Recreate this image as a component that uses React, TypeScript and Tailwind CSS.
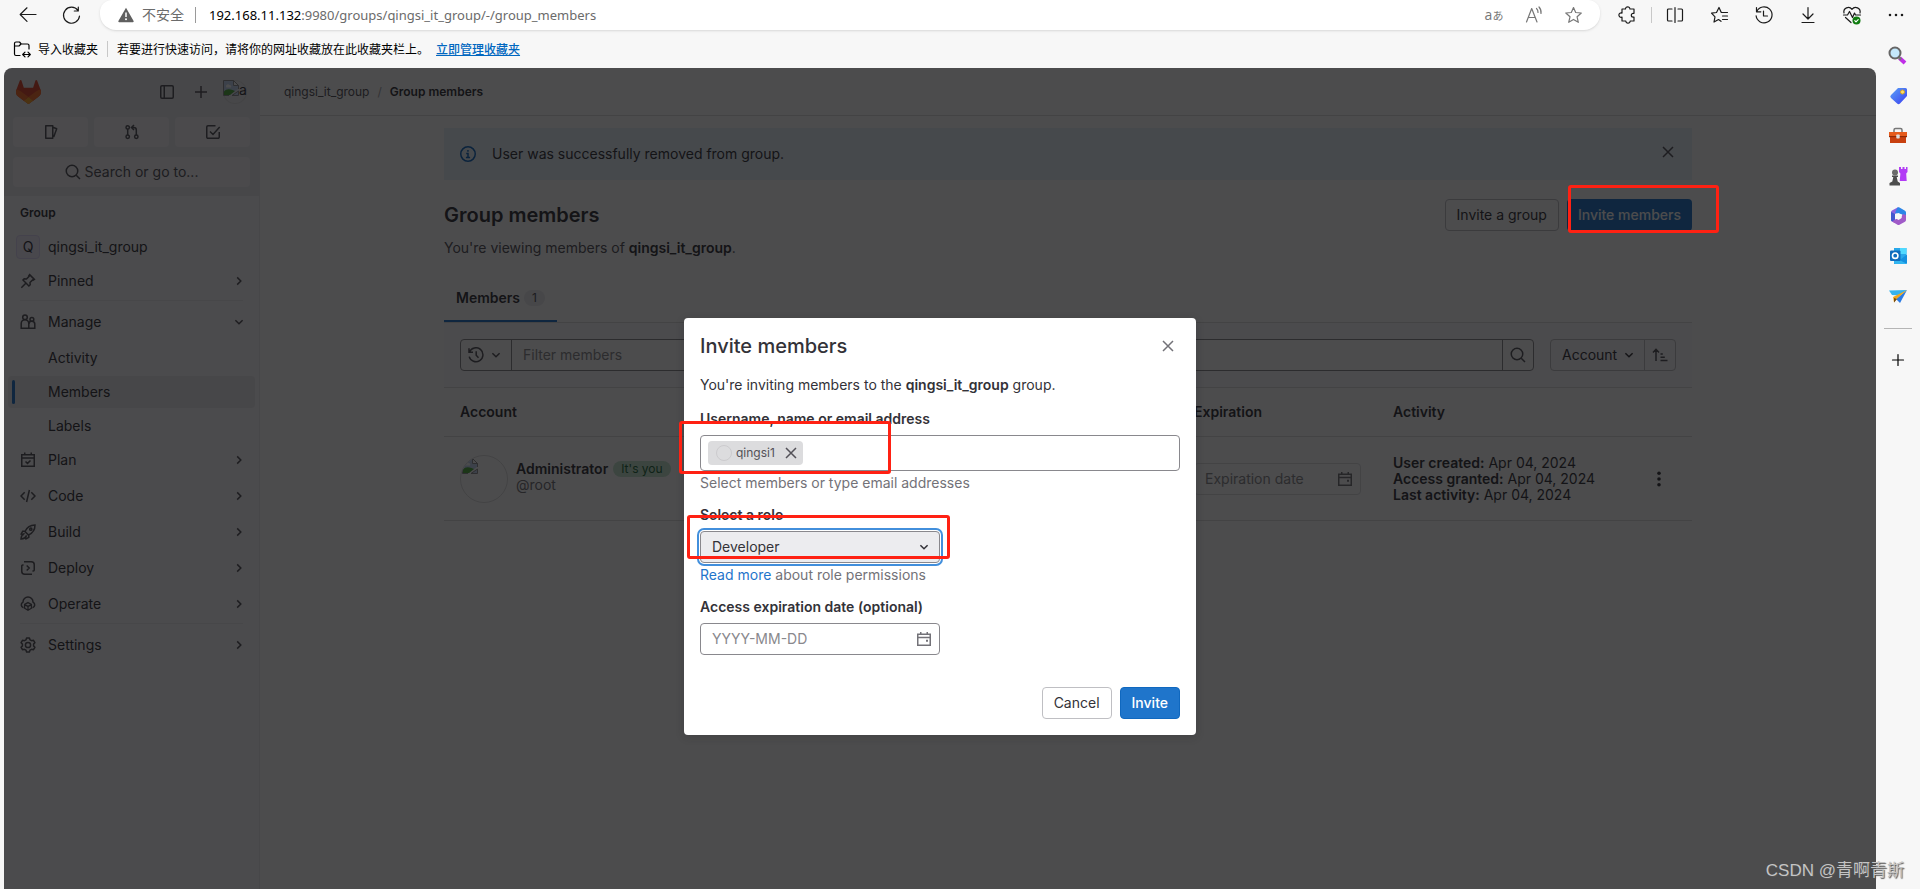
import React, { useState } from 'react';

type IconProps = { children: React.ReactNode; size?: number; className?: string; stroke?: number };

const Icon: React.FC<IconProps> = ({ children, size = 16, className = '', stroke = 1.5 }) => (
  <svg width={size} height={size} viewBox="0 0 16 16" fill="none" stroke="currentColor" strokeWidth={stroke} className={`shrink-0 ${className}`} aria-hidden="true">
    {children}
  </svg>
);

// 20x20 outline icons used by the browser chrome
const ChromeIcon: React.FC<IconProps> = ({ children, size = 20, className = '', stroke = 1.2 }) => (
  <svg width={size} height={size} viewBox="0 0 20 20" fill="none" stroke="currentColor" strokeWidth={stroke} strokeLinecap="round" strokeLinejoin="round" className={`shrink-0 ${className}`} aria-hidden="true">
    {children}
  </svg>
);

const ChevronRight = () => <Icon><path d="M6.2 4.4 9.8 8l-3.6 3.6" /></Icon>;
const ChevronDown = () => <Icon><path d="M4.4 6.2 8 9.8l3.6-3.6" /></Icon>;
const Close = () => <Icon><path d="m3 3 10 10M13 3 3 13" /></Icon>;
const SearchIcon = () => <Icon><circle cx="7" cy="7" r="5.75" /><path d="m11.2 11.2 3.8 3.8" /></Icon>;
const History = () => (
  <Icon><path d="M1 1.2v4h4M1.5 5A7 7 0 1 1 1.2 9.6M8.2 4.2v4.1l2.3 2.4" /></Icon>
);
const Calendar = () => (
  <Icon><path d="M1.75 3.25h12.5v11H1.75zM1.75 6.4h12.5M4.75 1v2.5M11.25 1v2.5" /><path d="M10 9.75h2" strokeWidth="2" /></Icon>
);

const Tanuki = () => (
  <svg width="25" height="24" viewBox="0 0 25 24" aria-hidden="true">
    <path d="m24.507 9.5-.034-.09L21.082.562a.896.896 0 0 0-1.694.091l-2.29 7.01H7.825L5.535.653a.898.898 0 0 0-1.694-.09L.451 9.411.416 9.5a6.297 6.297 0 0 0 2.09 7.278l.012.01.03.022 5.16 3.867 2.56 1.935 1.554 1.176a1.051 1.051 0 0 0 1.268 0l1.555-1.176 2.56-1.935 5.197-3.89.014-.01A6.297 6.297 0 0 0 24.507 9.5Z" fill="#E24329" />
    <path d="m24.507 9.5-.034-.09a11.44 11.44 0 0 0-4.56 2.051l-7.447 5.632 4.742 3.584 5.197-3.89.014-.01A6.297 6.297 0 0 0 24.507 9.5Z" fill="#FC6D26" />
    <path d="m7.707 20.677 2.56 1.935 1.555 1.176a1.051 1.051 0 0 0 1.268 0l1.555-1.176 2.56-1.935-4.743-3.584-4.755 3.584Z" fill="#FCA326" />
    <path d="M5.01 11.461a11.43 11.43 0 0 0-4.56-2.05L.416 9.5a6.297 6.297 0 0 0 2.09 7.278l.012.01.03.022 5.16 3.867 4.745-3.584-7.444-5.632Z" fill="#FC6D26" />
  </svg>
);

const BrokenImage = () => (
  <svg width="16" height="16" viewBox="0 0 16 16" className="shrink-0" aria-hidden="true">
    <path d="M.5.5h10l5 5v3L6 15.500H.5z" fill="#c3d6f5" />
    <path d="M3 6.500a2 2 0 0 1 3.500-1.500A1.600 1.600 0 0 1 8 7.500H3.500z" fill="#fff" />
    <path d="M1 15v-3.500C3 9 6 8.500 9.500 10L12 11l-5 4z" fill="#4fae3c" />
    <path d="M6 15.500H.5V.5h10l5 5V9" fill="none" stroke="#8f8f93" />
    <path d="M10.500.5v5h5z" fill="#fff" stroke="#8f8f93" />
    <path d="M9 15.500h6.500v-4.500z" fill="#c3d6f5" stroke="#8f8f93" />
  </svg>
);

const navIcons: Record<string, React.ReactNode> = {
  Pinned: <Icon><path d="m9.6 1.6 4.8 4.8-1.2.8-.6-.3-2.6 2.6.2 2.3-1.3 1.2L3 7.1l1.2-1.3 2.3.2 2.6-2.6-.3-.6zM5.8 10.2 1.3 14.7" /></Icon>,
  Manage: <Icon><circle cx="5" cy="3.2" r="2.3" /><path d="M1.2 14.2V9.500a3.800 3.800 0 0 1 7.600 0v4.700z" /><circle cx="11.900" cy="5.400" r="1.900" /><path d="M9 14.200h5.800V10.500a3 3 0 0 0-6-.6" /></Icon>,
  Plan: <Icon><path d="M1.75 2.75h12.500v11.500H1.75zM1.75 6h12.500M4.75.500V3M11.250.500V3M5.500 9.500l2 1.900 3-2.900" /></Icon>,
  Code: <Icon><path d="M4.700 4.200 1 8l3.700 3.800M11.300 4.200 15 8l-3.700 3.800M9.400 2 6.600 14" /></Icon>,
  Build: <Icon><path d="M15 1c-5 0-8 2-10 6.500L8.500 11C13 9 15 6 15 1zM5.200 7.200H2.700L1.200 10l2.600.8M8.800 10.800v2.500L6 14.800l-.8-2.600M4.600 9.400C2 10.500 1.200 12 1 15c3-.2 4.500-1 5.600-3.600" /><circle cx="10.800" cy="5.200" r="1.100" /></Icon>,
  Deploy: <Icon><path d="M4 1.750h7.250a3 3 0 0 1 3 3V10a1 1 0 0 1-1 1h-.8M12 14.250H4.750a3 3 0 0 1-3-3V6a1 1 0 0 1 1-1h.8M6.700 5.500 9.200 8l-2.500 2.500" /></Icon>,
  Operate: <Icon><path d="M3.500 11.700A3 3 0 0 1 3 6.100a5 5 0 0 1 10 0 3 3 0 0 1-.5 5.600" /><path d="m8 6.600 3.400 1.900v3.700L8 14.200l-3.400-2V8.500zM4.600 8.600 8 10.400l3.400-1.800M8 10.400V14" strokeWidth="1.300" /></Icon>,
  Settings: <Icon><path d="M6.600 1h2.800l.6 1.800 1.600.9 1.900-.4 1.400 2.400L13.600 7.100v1.800l1.300 1.400-1.400 2.400-1.900-.4-1.600.9-.6 1.800H6.600L6 13.200l-1.600-.9-1.900.4-1.400-2.400 1.300-1.400V7.100L1.100 5.700l1.400-2.400 1.900.4L6 2.800z" strokeLinejoin="round" /><circle cx="8" cy="8" r="2.600" /></Icon>,
};

const Highlight: React.FC<{ className: string }> = ({ className }) => (
  <span className={`absolute z-30 border-[3px] border-[#ff2113] rounded-[3px] pointer-events-none ${className}`} />
);

const NavItem: React.FC<{ label: string; open?: boolean }> = ({ label, open }) => (
  <button className="w-full h-8 pl-3 pr-2 flex items-center text-left text-sm text-[#333238]">
    <span className="w-7 text-[#535158]">{navIcons[label]}</span>
    <span className="flex-1">{label}</span>
    <span className="text-[#535158]">{open ? <ChevronDown /> : <ChevronRight />}</span>
  </button>
);

const SubItem: React.FC<{ label: string; active?: boolean }> = ({ label, active }) => (
  <a href="#" className={`h-8 pl-1 flex items-center rounded text-sm text-[#333238] ${active ? 'bg-[#ececef]' : ''}`}>
    <span className={`w-[3px] h-6 rounded-sm ${active ? 'bg-[#1f75cb]' : ''}`} />
    <span className="ml-[33px]">{label}</span>
  </a>
);

const BrowserBar = () => (
  <header className="bg-[#f7f7f7] text-[#1b1b1b]">
    <div className="h-[30px] flex items-start">
      <div className="w-[100px] shrink-0 h-6 mt-[3px] flex items-center">
        <button aria-label="Back" className="ml-[18px] mr-6"><ChromeIcon><path d="M18 9.500H2.500M9 2.800 2.200 9.500 9 16.300" /></ChromeIcon></button>
        <button aria-label="Refresh"><ChromeIcon><path d="M16 5.500A8 8 0 1 0 17.500 11M16.300 2v4h-4" /></ChromeIcon></button>
      </div>
      <div className="flex-1 h-[30px] bg-white rounded-b-2xl rounded-t-xl shadow-sm flex items-center pl-[18px] pr-4 font-['Open_Sans','Noto_Sans_CJK_SC',sans-serif]">
        <svg width="16" height="16" viewBox="0 0 16 16" aria-hidden="true">
          <path d="M8 .8 15.600 14a.8.8 0 0 1-.7 1.200H1.100A.8.800 0 0 1 .4 14z" fill="#5f5f5f" />
          <path d="M8 5.500v4.500" stroke="#fff" strokeWidth="1.500" /><circle cx="8" cy="12.300" r="1" fill="#fff" />
        </svg>
        <span className="ml-2 text-sm leading-5 text-[#6b6b6b]">不安全</span>
        <span className="w-px h-4 mx-[11px] bg-[#9a9a9a]" />
        <span className="flex-1 ml-0.5 text-[13px] leading-5 text-[#6b6b6b] font-['Noto_Sans',sans-serif]"><span className="text-black">192.168.11.132</span>:9980/groups/qingsi_it_group/-/group_members</span>
        <div className="flex items-center gap-5 text-[#777]">
          <button aria-label="Translate" className="w-5 text-sm leading-5 whitespace-nowrap">a<span className="text-[11px]">あ</span></button>
          <button aria-label="Read aloud"><ChromeIcon><path d="m2.500 17 5.200-13.500L13 17M4.500 12.500h6.500M12.500 3.500a5 5 0 0 1 1.500 4M15 2a8 8 0 0 1 2 6.500" /></ChromeIcon></button>
          <button aria-label="Add to favorites"><ChromeIcon><path d="m9.500 2.500 2.200 5 5.600.5-4.200 3.800 1.200 5.500-4.800-2.900-4.800 2.900L6 11.800 1.800 8l5.500-.5z" /></ChromeIcon></button>
        </div>
      </div>
      <div className="h-[30px] pl-[18px] pr-3.5 flex items-center gap-6">
        <button aria-label="Extensions"><ChromeIcon><path d="M4 4h3.500a2.200 2.200 0 1 1 4.400 0H16v4.300h-.8a1.900 1.900 0 1 0 0 3.800h.8V16h-3.800a2.200 2.200 0 1 1-4.400 0H4v-3.900a2.200 2.200 0 1 1 0-4z" /></ChromeIcon></button>
        <span className="w-px h-4 -mx-[11px] bg-[#c8c8c8]" />
        <button aria-label="Split screen"><ChromeIcon><path d="M7 4H3.500a1 1 0 0 0-1 1v10a1 1 0 0 0 1 1H7M13 4h3.500a1 1 0 0 1 1 1v10a1 1 0 0 1-1 1H13M10 2.500v15" /></ChromeIcon></button>
        <button aria-label="Favorites" className="ml-px"><ChromeIcon><path d="M11 16.300 8.500 14.500 4 17l1-5.200L1.500 8.200l5-.7L9 2.500l2.300 5h6.200M12.500 11h5M12.500 14.500h5" /></ChromeIcon></button>
        <button aria-label="History"><ChromeIcon><path d="M2.500 2.500v4.300h4.300M2.800 6.500a8 8 0 1 1-.7 4.300M9.500 6v5h4" /></ChromeIcon></button>
        <button aria-label="Downloads"><ChromeIcon><path d="M10 2.500v11.500M5 9l5 5 5-5M4 17.500h12" /></ChromeIcon></button>
        <button aria-label="Performance"><ChromeIcon><path d="M2 8a4.500 4.500 0 0 1 8-3.700A4.500 4.500 0 0 1 18 8M3.500 12.500l5.500 5M1.500 10h4l2-3.500 3 6L12.500 8l1 2h5" /><circle cx="14.500" cy="15.500" r="4" fill="#107c10" stroke="none" /><path d="m12.800 15.600 1.200 1.200 2.200-2.200" stroke="#fff" /></ChromeIcon></button>
        <button aria-label="More"><ChromeIcon><path d="M4 10h.01M10 10h.01M16 10h.01" strokeWidth="2.600" /></ChromeIcon></button>
      </div>
    </div>
    <div className="h-[38px] pl-3 flex items-center text-xs leading-4 text-black font-['Noto_Sans_CJK_SC',sans-serif]">
      <button className="flex items-center gap-1.5"><ChromeIcon><path d="M8 16.500H4A1.500 1.500 0 0 1 2.500 15V4.500A1.500 1.500 0 0 1 4 3h3.500l1.700 2h6.300A1.500 1.500 0 0 1 17 6.500V10M2.500 7H7l2-2M11 15.500h7M13 13.200l-2.300 2.300 2.300 2.300M16 13.200l2.300 2.300-2.300 2.300" /></ChromeIcon>导入收藏夹</button>
      <span className="w-px h-4 mx-[9px] bg-[#c8c8c8]" />
      <span>若要进行快速访问，请将你的网址收藏放在此收藏夹栏上。</span>
      <a href="#" className="ml-[7px] font-medium text-[#0067c0] underline">立即管理收藏夹</a>
    </div>
  </header>
);

const EdgeRail = () => (
  <aside className="w-11 pr-px shrink-0 flex flex-col items-center gap-4 bg-[#f7f7f7] -mt-6">
    <button aria-label="Search">
      <svg width="24" height="24" viewBox="0 0 24 24"><path d="m13.500 14 5.500 5" stroke="#c02ee8" strokeWidth="4" /><path d="m13 13.500 2 2" stroke="#777" strokeWidth="2.500" /><circle cx="9" cy="9" r="5.500" fill="#c4e8fb" stroke="#666" strokeWidth="2" /></svg>
    </button>
    <button aria-label="Shopping">
      <svg width="24" height="24" viewBox="0 0 24 24"><defs><linearGradient id="tag" x1="0" y1="0" x2="1" y2="1"><stop stopColor="#5aa2f7" /><stop offset="1" stopColor="#3b3ff0" /></linearGradient></defs><path d="M12 4h7.500a1.500 1.500 0 0 1 1.500 1.500v6.500l-7 7.500a2 2 0 0 1-2.900 0L5 14a2 2 0 0 1 0-2.900z" fill="url(#tag)" /><circle cx="16.500" cy="8" r="2" fill="#ffe066" stroke="#d9a520" /></svg>
    </button>
    <button aria-label="Tools">
      <svg width="24" height="24" viewBox="0 0 24 24"><path d="M8 8.500V6a1.500 1.500 0 0 1 1.500-1.500h5A1.500 1.500 0 0 1 16 6v2.500" fill="none" stroke="#777" strokeWidth="1.500" /><path d="M3 8h18v5H3z" fill="#e55b1c" /><path d="M4 13h16v6H4z" fill="#c8400f" /><path d="M3 12h18v1.200H3z" fill="#8f2a08" /><rect x="10.300" y="10.500" width="3.400" height="4" rx=".7" fill="#ddd" /></svg>
    </button>
    <button aria-label="Games">
      <svg width="24" height="24" viewBox="0 0 24 24"><path d="M13 3h2v2h1.500V3h2v2H20V3h1.500v5l-1.300 1.500.5 7.500h-7l.7-7.500L13 8z" fill="#b23cf5" /><circle cx="9" cy="8.500" r="3" fill="#6b6b6b" /><path d="M6 11.500h6v1.500h-1.300l1 4.500 2.300 1.500v2.500H3.500V19L6.300 17.500l1-4.500H6z" fill="#4d4d4d" /></svg>
    </button>
    <button aria-label="Microsoft 365">
      <svg width="24" height="24" viewBox="0 0 24 24"><path d="M11.500 3.500 6 6.500a2 2 0 0 0-1 1.800v7.400a2 2 0 0 0 1 1.800l3 1.500V10l6-3.500-2-2.700a1.500 1.500 0 0 0-1.500-.3z" fill="#8c63e0" /><path d="M11.500 3.500a2 2 0 0 1 2 0l5.500 3.300a2 2 0 0 1 1 1.700V13l-4-2.500-7-1.500z" fill="#2b86e8" /><path d="M20 11v5a2 2 0 0 1-1 1.700l-5.500 3a2 2 0 0 1-2 0L6 17.500l4-2.500 4-.5 3-4.500z" fill="#a05bc8" /><path d="m5 8 4 2v5.500l-3 2a2 2 0 0 1-1-1.800z" fill="#4257cf" /><path d="m12.500 9 3.200 1.600v3.500l-3.200 1.900-3.200-1.900v-3.500z" fill="#f7f7f7" /></svg>
    </button>
    <button aria-label="Outlook">
      <svg width="24" height="24" viewBox="0 0 24 24"><path d="M8 4h12.500v15H8z" fill="#28a8ea" /><path d="M14 4h6.500v6H14z" fill="#50d9ff" /><path d="m8 12 6.500 3.500 6.500-5v8.500a1 1 0 0 1-1 1H8z" fill="#1490df" /><path d="m8 13 13 7H9a1 1 0 0 1-1-1z" fill="#32b5f0" /><rect x="4" y="6.500" width="10.500" height="10.500" rx="1" fill="#0f6cbd" /><circle cx="9.200" cy="11.700" r="2.700" fill="none" stroke="#fff" strokeWidth="1.600" /></svg>
    </button>
    <button aria-label="Drop">
      <svg width="24" height="24" viewBox="0 0 24 24"><path d="M3 6.500 21 6l-8 5.500-7-.5z" fill="#36b3ee" /><path d="m21 6-7 13-4-4z" fill="#2a7be4" /><path d="M21 6 7 13l1 5.500 2.500-3.500z" fill="#f2a81d" /><path d="M8 18.500v-4.500l3 .9z" fill="#7b4c10" /></svg>
    </button>
    <span className="w-7 h-px mt-1 bg-[#b5b5b5]" />
    <button aria-label="Customize" className="mt-[5px]"><ChromeIcon><path d="M10 4.500v11M4.500 10h11" /></ChromeIcon></button>
  </aside>
);

const Sidebar = () => (
  <aside className="w-64 shrink-0 border-r border-[#ececef] bg-[#fbfafd]">
    <div className="h-32 px-[9px] pt-3 bg-[#ececef]">
      <div className="h-6 pl-[3px] pr-[3px] flex items-center text-[#535158]">
        <a href="#" aria-label="Homepage" className="flex-1"><Tanuki /></a>
        <button aria-label="Primary navigation sidebar"><Icon><rect x="1.750" y="1.750" width="12.500" height="12.500" rx="1.200" /><path d="M5.250 1.750v12.500" /></Icon></button>
        <button aria-label="Create new" className="ml-[18px]"><Icon><path d="M8 2v12M2 8h12" /></Icon></button>
        <button aria-label="User menu" className="w-6 h-6 ml-3.5 rounded-full ring-1 ring-inset ring-[#dcdcde] flex items-start text-sm leading-5 text-[#333238]"><BrokenImage />a</button>
      </div>
      <div className="mt-[13px] grid grid-cols-3 gap-1.5 text-[#535158]">
        <button aria-label="Issues" className="h-[30px] rounded bg-[#f9f8fb] flex items-center justify-center"><Icon><path d="M2.750 1.750h7v12.500h-7zM9.900 3.200l3.800 1.600-3 8.200" strokeLinejoin="round" /></Icon></button>
        <button aria-label="Merge requests" className="h-[30px] rounded bg-[#f9f8fb] flex items-center justify-center"><Icon><circle cx="3.700" cy="3.400" r="1.700" /><circle cx="3.700" cy="12.800" r="1.700" /><circle cx="12.300" cy="12.800" r="1.700" /><path d="M3.700 5.100v6M12.300 11.100V6a2.500 2.500 0 0 0-2.500-2.500H8M10 1 7.500 3.500 10 6" /></Icon></button>
        <button aria-label="To-Do List" className="h-[30px] rounded bg-[#f9f8fb] flex items-center justify-center"><Icon><path d="M10.500 1.750H3a1.250 1.250 0 0 0-1.250 1.250v10A1.250 1.250 0 0 0 3 14.250h10A1.250 1.250 0 0 0 14.250 13V8M5 7.500l3 3 6.700-7.500" /></Icon></button>
      </div>
      <button className="w-full h-[30px] mt-2.5 rounded bg-[#f9f8fb] flex items-center justify-center gap-1 text-sm text-[#535158]"><SearchIcon />Search or go to...</button>
    </div>
    <nav className="px-1 text-sm">
      <div className="pl-3 mt-[9px] text-xs leading-4 font-semibold text-[#333238]">Group</div>
      <a href="#" className="h-8 mt-2.5 pl-2 flex items-center gap-2 text-[#333238]">
        <span className="w-6 h-6 rounded border border-[#e1d8f9] bg-[#f4f0ff] text-center leading-[22px]">Q</span>
        qingsi_it_group
      </a>
      <div className="mt-0.5"><NavItem label="Pinned" /></div>
      <hr className="mx-3 mt-[3px] mb-[5px] border-[#ececef]" />
      <NavItem label="Manage" open />
      <div className="mt-1 flex flex-col gap-0.5">
        <SubItem label="Activity" />
        <SubItem label="Members" active />
        <SubItem label="Labels" />
      </div>
      <div className="mt-0.5 flex flex-col gap-1">
        <NavItem label="Plan" />
        <NavItem label="Code" />
        <NavItem label="Build" />
        <NavItem label="Deploy" />
        <NavItem label="Operate" />
      </div>
      <hr className="mx-3 mt-[3px] mb-[5px] border-[#ececef]" />
      <NavItem label="Settings" />
    </nav>
  </aside>
);

const activity = [
  { label: 'User created:', date: 'Apr 04, 2024' },
  { label: 'Access granted:', date: 'Apr 04, 2024' },
  { label: 'Last activity:', date: 'Apr 04, 2024' },
];

const GroupMembers = () => (
  <main className="flex-1 min-w-0 bg-white">
    <nav aria-label="Breadcrumb" className="h-12 px-6 flex items-center gap-1.5 border-b border-[#dcdcde] text-xs">
      <a href="#" className="text-[#535158]">qingsi_it_group</a>
      <span className="px-0.5 text-[#a4a3a8]">/</span>
      <a href="#" className="font-semibold text-[#333238]">Group members</a>
    </nav>
    <div className="max-w-[1280px] mx-auto px-4 pt-3">
      <div className="h-[52px] px-4 flex items-center bg-[#e9f3fc]">
        <span className="text-[#1068bf]"><Icon><circle cx="8" cy="8" r="7.250" /><path d="M6.200 7.500H8v3.700M5.900 11.500h4.200" /><path d="M7.200 4.800h1.500" strokeWidth="1.800" /></Icon></span>
        <p className="flex-1 ml-4 text-sm">User was successfully removed from group.</p>
        <button aria-label="Dismiss" className="mb-1 text-[#535158]"><Close /></button>
      </div>
      <div className="mt-[19px] flex items-center justify-between">
        <h1 className="text-xl font-semibold leading-8">Group members</h1>
        <div className="flex gap-2 text-sm">
          <button className="h-8 px-[11px] rounded border border-[#bfbfc3] bg-white">Invite a group</button>
          <div className="relative">
            <button className="h-8 px-[11px] rounded bg-[#1f75cb] text-white font-medium">Invite members</button>
            <Highlight className="left-px -top-3.5 -right-[27px] h-12" />
          </div>
        </div>
      </div>
      <p className="mt-[7px] text-sm text-[#535158]">You're viewing members of <strong className="font-semibold text-[#333238]">qingsi_it_group</strong>.</p>
      <div className="mt-[22px] flex border-b border-[#dcdcde]">
        <button className="h-[42px] px-3 pb-1 flex items-center gap-1 border-b-2 border-[#1f75cb] text-sm font-semibold">
          Members
          <span className="h-4 px-2 rounded-full bg-[#ececef] text-xs font-normal leading-4 text-[#535158]">1</span>
        </button>
      </div>
      <div className="h-16 px-4 flex items-center bg-[#fbfafd] text-sm">
        <div className="h-8 flex-1 flex rounded border border-[#89888d] bg-white">
          <button aria-label="Toggle history" className="w-[51px] flex items-center justify-center gap-1 border-r border-[#89888d] text-[#535158]"><History /><ChevronDown /></button>
          <input aria-label="Filter members" placeholder="Filter members" className="flex-1 min-w-0 px-[11px] outline-none placeholder:text-[#89888d]" />
          <button aria-label="Search" className="w-[31px] flex items-center justify-center border-l border-[#89888d] text-[#535158]"><SearchIcon /></button>
        </div>
        <div className="h-8 ml-4 flex rounded border border-[#bfbfc3]">
          <label className="relative flex items-center">
            <select aria-label="Sort by" className="w-[93px] h-full pl-[11px] appearance-none outline-none"><option>Account</option></select>
            <span className="absolute right-[7px] pointer-events-none"><ChevronDown /></span>
          </label>
          <button aria-label="Sort direction" className="w-[31px] flex items-center justify-center border-l border-[#bfbfc3] text-[#535158]"><Icon><path d="M4 14V2.500M1 5.500l3-3.200 3 3.200M8.500 7h2.300M8.500 10.300h4.300M8.500 13.500h7" /></Icon></button>
        </div>
      </div>
      <table className="w-full table-fixed text-sm text-left">
        <thead>
          <tr className="h-[49px] border-y border-[#dcdcde]">
            <th className="px-4 font-semibold">Account</th>
            <th className="w-[199px] px-4 font-semibold">Expiration</th>
            <th className="w-[235px] px-4 font-semibold">Activity</th>
            <th className="w-20" aria-label="Actions" />
          </tr>
        </thead>
        <tbody>
          <tr className="h-[84px] border-b border-[#dcdcde]">
            <td className="px-4">
              <div className="flex items-center gap-2">
                <span className="w-12 h-12 pl-px pt-0.5 rounded-full border border-[#dcdcde] overflow-hidden"><BrokenImage /></span>
                <div className="pb-1 leading-4">
                  <div className="flex items-center gap-[5px] font-semibold">Administrator<span className="px-2 rounded-full bg-[#c3e6cd] text-xs leading-4 font-normal text-[#24663b]">It's you</span></div>
                  <div className="text-[#737278]">@root</div>
                </div>
              </div>
            </td>
            <td className="px-4">
              <div className="h-8 flex items-center pr-[7px] rounded border border-[#dcdcde] text-[#737278]">
                <input aria-label="Expiration date" placeholder="Expiration date" className="flex-1 min-w-0 pl-2.5 outline-none placeholder:text-[#89888d]" />
                <Calendar />
              </div>
            </td>
            <td className="pl-4 leading-4">
              {activity.map((a) => (
                <div key={a.label}><span className="font-semibold">{a.label}</span> {a.date}</div>
              ))}
            </td>
            <td className="pr-[17px] text-right">
              <button aria-label="More actions" className="w-8 h-8 inline-flex items-center justify-center align-middle">
                <svg width="16" height="16" viewBox="0 0 16 16" fill="currentColor"><circle cx="8" cy="2.200" r="1.800" /><circle cx="8" cy="8" r="1.800" /><circle cx="8" cy="13.800" r="1.800" /></svg>
              </button>
            </td>
          </tr>
        </tbody>
      </table>
    </div>
  </main>
);

const InviteModal = () => {
  const [role, setRole] = useState('Developer');

  return (
    <div role="dialog" aria-labelledby="invite-title" className="w-[512px] p-4 rounded bg-white text-sm text-[#333238] shadow-[0_2px_8px_#1f1e2433]">
      <div className="h-6 flex items-center justify-between">
        <h2 id="invite-title" className="text-xl font-medium leading-6">Invite members</h2>
        <button aria-label="Close" className="mr-1 text-[#737278]"><Close /></button>
      </div>
      <p className="mt-[17px] leading-5">You're inviting members to the <strong className="font-semibold">qingsi_it_group</strong> group.</p>
      <div className="relative mt-3.5">
        <label htmlFor="invitees" className="block leading-5 font-semibold">Username, name or email address</label>
        <div className="h-9 mt-1.5 px-[7px] flex items-center rounded border border-[#89888d]">
          <span className="h-6 pl-2 pr-1 flex items-center rounded-sm bg-[#dcdcde] text-xs text-[#535158]">
            <span className="w-4 h-4 mr-1 rounded-full border border-[#cccbce]" />
            qingsi1
            <button aria-label="Remove qingsi1" className="ml-2"><Close /></button>
          </span>
          <input id="invitees" className="flex-1 min-w-0 ml-2 outline-none" />
        </div>
        <Highlight className="-left-[21px] top-3 w-[212px] h-[53px]" />
      </div>
      <p className="mt-0.5 leading-5 text-[#737278]">Select members or type email addresses</p>
      <div className="relative w-60 mt-3">
        <label htmlFor="role" className="block leading-5 font-semibold">Select a role</label>
        <div className="relative mt-1.5 flex items-center">
          <select id="role" value={role} onChange={(e) => setRole(e.target.value)} className="w-full h-8 px-[11px] appearance-none rounded border border-[#89888d] bg-[#ececef] outline-none ring-2 ring-[#428fdc] ring-offset-1">
            <option>Developer</option>
          </select>
          <span className="absolute right-2 pointer-events-none"><ChevronDown /></span>
        </div>
        <Highlight className="-left-[13px] top-2.5 w-[263px] h-11" />
      </div>
      <p className="mt-0.5 leading-5 text-[#737278]"><a href="#" className="text-[#1f75cb]">Read more</a> about role permissions</p>
      <div className="w-60 mt-3">
        <label htmlFor="expires" className="block leading-5 font-semibold">Access expiration date (optional)</label>
        <div className="h-8 mt-1.5 pr-[7px] flex items-center rounded border border-[#89888d] text-[#737278]">
          <input id="expires" placeholder="YYYY-MM-DD" className="flex-1 min-w-0 pl-[11px] outline-none placeholder:text-[#89888d]" />
          <Calendar />
        </div>
      </div>
      <div className="mt-8 flex justify-end gap-2">
        <button className="h-8 px-[11px] rounded border border-[#bfbfc3]">Cancel</button>
        <button className="h-8 px-[11px] rounded border border-[#1068bf] bg-[#1f75cb] text-white font-medium">Invite</button>
      </div>
    </div>
  );
};

const App: React.FC = () => (
  <div className="relative min-h-screen flex flex-col bg-[#f7f7f7] font-['Inter','Noto_Sans_CJK_SC',sans-serif]">
    <BrowserBar />
    <div className="flex-1 flex pl-1">
      <div className="relative flex-1 min-w-0 flex rounded-t-lg overflow-hidden text-[#333238]">
        <Sidebar />
        <GroupMembers />
        <div className="absolute inset-0 z-10 bg-[#0a0a0b]/73" />
        <div className="absolute inset-0 z-20 pt-[250px] flex items-start justify-center">
          <InviteModal />
        </div>
      </div>
      <EdgeRail />
    </div>
    <span className="absolute z-40 right-4 bottom-1.5 text-[17px] leading-6 text-[#c4c4c4] [text-shadow:1px_1px_1px_#555] font-['Liberation_Sans','Noto_Sans_CJK_SC',sans-serif]">CSDN @青啊青斯</span>
  </div>
);

export default App;
